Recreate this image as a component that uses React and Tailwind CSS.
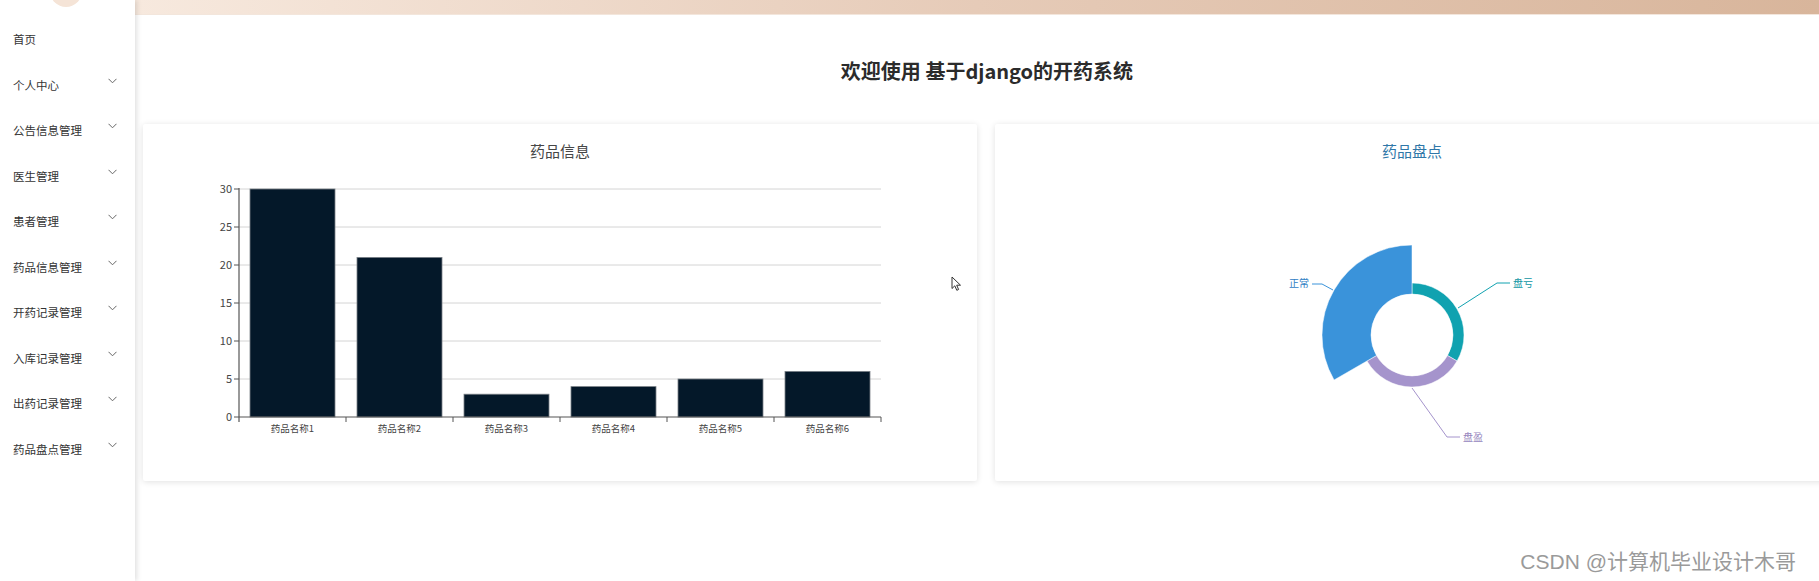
import React from "react";

const menus = [
  { name: "首页", sub: false },
  { name: "个人中心", sub: true },
  { name: "公告信息管理", sub: true },
  { name: "医生管理", sub: true },
  { name: "患者管理", sub: true },
  { name: "药品信息管理", sub: true },
  { name: "开药记录管理", sub: true },
  { name: "入库记录管理", sub: true },
  { name: "出药记录管理", sub: true },
  { name: "药品盘点管理", sub: true },
];

const drugs = [
  { name: "药品名称1", value: 30 },
  { name: "药品名称2", value: 21 },
  { name: "药品名称3", value: 3 },
  { name: "药品名称4", value: 4 },
  { name: "药品名称5", value: 5 },
  { name: "药品名称6", value: 6 },
];

const FONT = { fontFamily: '"Noto Sans CJK SC", "Noto Sans", sans-serif' };

// bar chart geometry (svg coords inside the card)
const X0 = 96;
const X1 = 738;
const Y0 = 256;
const UNIT = 7.6;

const BarChart = () => {
  const cw = (X1 - X0) / drugs.length;
  return (
    <svg viewBox="0 0 834 300" className="block h-[300px] w-[834px]" style={FONT}>
      {/* grid + y labels */}
      {[0, 5, 10, 15, 20, 25, 30].map((v) => {
        const y = Y0 - v * UNIT;
        return (
          <g key={v}>
            {v > 0 && <line x1={X0} x2={X1} y1={y} y2={y} stroke="#d4d4d4" strokeWidth="1" />}
            <line x1={X0 - 5} x2={X0} y1={y} y2={y} stroke="#555" strokeWidth="1" />
            <text x={X0 - 7} y={y + 4} fontSize="11" fill="#444" textAnchor="end">
              {v}
            </text>
          </g>
        );
      })}

      {/* bars */}
      {drugs.map((d, i) => {
        const h = d.value * UNIT;
        const x = X0 + i * cw + 11;
        return (
          <g key={d.name}>
            <rect x={x} y={Y0 - h} width={cw - 22} height={h} fill="#041829" stroke="#7a8087" strokeWidth="0.8" />
            <text x={X0 + i * cw + cw / 2} y={Y0 + 15} fontSize="9.5" fill="#444" textAnchor="middle">
              {d.name}
            </text>
          </g>
        );
      })}

      {/* axes */}
      <line x1={X0} x2={X0} y1={Y0 - 30 * UNIT - 1} y2={Y0 + 5} stroke="#555" strokeWidth="1.2" />
      <line x1={X0} x2={X1} y1={Y0} y2={Y0} stroke="#555" strokeWidth="1.2" />
      {drugs.map((d, i) => (
        <line key={i} x1={X0 + (i + 1) * cw} x2={X0 + (i + 1) * cw} y1={Y0} y2={Y0 + 5} stroke="#555" strokeWidth="1" />
      ))}
    </svg>
  );
};

// donut / rose helpers
const CX = 417;
const CY = 174;
const pt = (r, deg) => {
  const a = (deg * Math.PI) / 180;
  return [CX + r * Math.cos(a), CY + r * Math.sin(a)];
};
const sector = (r0, r1, a0, a1) => {
  const [x0, y0] = pt(r1, a0);
  const [x1, y1] = pt(r1, a1);
  const [x2, y2] = pt(r0, a1);
  const [x3, y3] = pt(r0, a0);
  return `M${x0} ${y0} A${r1} ${r1} 0 0 1 ${x1} ${y1} L${x2} ${y2} A${r0} ${r0} 0 0 0 ${x3} ${y3} Z`;
};

const RoseChart = () => (
  <svg viewBox="0 0 834 300" className="block h-[300px] w-[834px]" style={FONT}>
    <path d={sector(41, 52, -90, 30)} fill="#10a2b0" stroke="#fff" strokeWidth="0.5" />
    <path d={sector(41, 52, 30, 150)} fill="#a594cc" stroke="#fff" strokeWidth="0.5" />
    <path d={sector(41, 90, 150, 270)} fill="#3a93da" stroke="#fff" strokeWidth="0.5" />

    {/* labels */}
    <polyline points="338,129 327,123 317,123" fill="none" stroke="#3a93da" strokeWidth="1" />
    <text x="314" y="126" fontSize="10" fill="#2f80c4" textAnchor="end">
      正常
    </text>
    <polyline points="463,147 502,122 515,122" fill="none" stroke="#10a2b0" strokeWidth="1" />
    <text x="518" y="126" fontSize="10" fill="#0f96a4">
      盘亏
    </text>
    <polyline points="417,227 452,276 465,276" fill="none" stroke="#a594cc" strokeWidth="1" />
    <text x="468" y="280" fontSize="10" fill="#9584bd">
      盘盈
    </text>
  </svg>
);

const Chevron = () => (
  <svg width="9" height="6" viewBox="0 0 9 6" className="mb-[9px]">
    <path d="M0.5 0.8 L4.5 4.8 L8.5 0.8" fill="none" stroke="#666" strokeWidth="1" />
  </svg>
);

const App = () => {
  return (
    <div className="relative flex h-[581px] w-[1819px] overflow-hidden bg-white" style={FONT}>
      {/* sidebar */}
      <aside className="relative z-10 w-[135px] shrink-0 bg-white shadow-[2px_0_5px_rgba(0,0,0,0.12)]">
        <div className="absolute left-[50px] top-[-25px] h-[32px] w-[32px] rounded-full bg-[#f5e4d7]" />
        <ul className="pt-[17px]">
          {menus.map((m) => (
            <li key={m.name} className="flex h-[45.5px] items-center justify-between pl-[13px] pr-[18px] text-[11.5px] text-[#333]">
              <span>{m.name}</span>
              {m.sub && <Chevron />}
            </li>
          ))}
        </ul>
      </aside>

      {/* main */}
      <main className="relative flex min-w-0 flex-1 flex-col">
        <div className="h-[15px] bg-gradient-to-r from-[#f7e9de] via-[#e6cbb8] to-[#d8b59b] border-b border-[#f3e6dc]" />

        <h1 className="mt-[42px] pl-[20px] text-center text-[20px] font-bold leading-[28px] text-[#2b2b2b]">
          欢迎使用 基于django的开药系统
        </h1>

        <div className="mt-[39px] flex gap-[18px] pl-[8px]">
          <section className="h-[357px] w-[834px] shrink-0 rounded-[2px] bg-white shadow-[0_1px_6px_rgba(0,0,0,0.12)]">
            <h2 className="pt-[17px] text-center text-[15px] leading-[20px] text-[#464646]">药品信息</h2>
            <BarChart />
          </section>
          <section className="h-[357px] w-[834px] shrink-0 rounded-[2px] bg-white shadow-[0_1px_6px_rgba(0,0,0,0.12)]">
            <h2 className="pt-[17px] text-center text-[15px] leading-[20px] text-[#2f77a8]">药品盘点</h2>
            <RoseChart />
          </section>
        </div>

        {/* mouse pointer captured in the screenshot */}
        <svg width="11" height="16" viewBox="0 0 11 16" className="absolute left-[816px] top-[276px]">
          <path d="M1 1 L1 12.5 L3.8 9.8 L5.8 14.3 L7.6 13.5 L5.7 9.2 L9.5 9.2 Z" fill="#fff" stroke="#333" strokeWidth="1" strokeLinejoin="round" />
        </svg>

        <div
          className="absolute bottom-[4px] right-[23px] text-[21px] text-[#9a9a9a] [text-shadow:0_0_1px_#fff]"
          style={{ fontFamily: '"Liberation Sans", "Noto Sans CJK SC", sans-serif' }}
        >
          CSDN @计算机毕业设计木哥
        </div>
      </main>
    </div>
  );
};

export default App;
